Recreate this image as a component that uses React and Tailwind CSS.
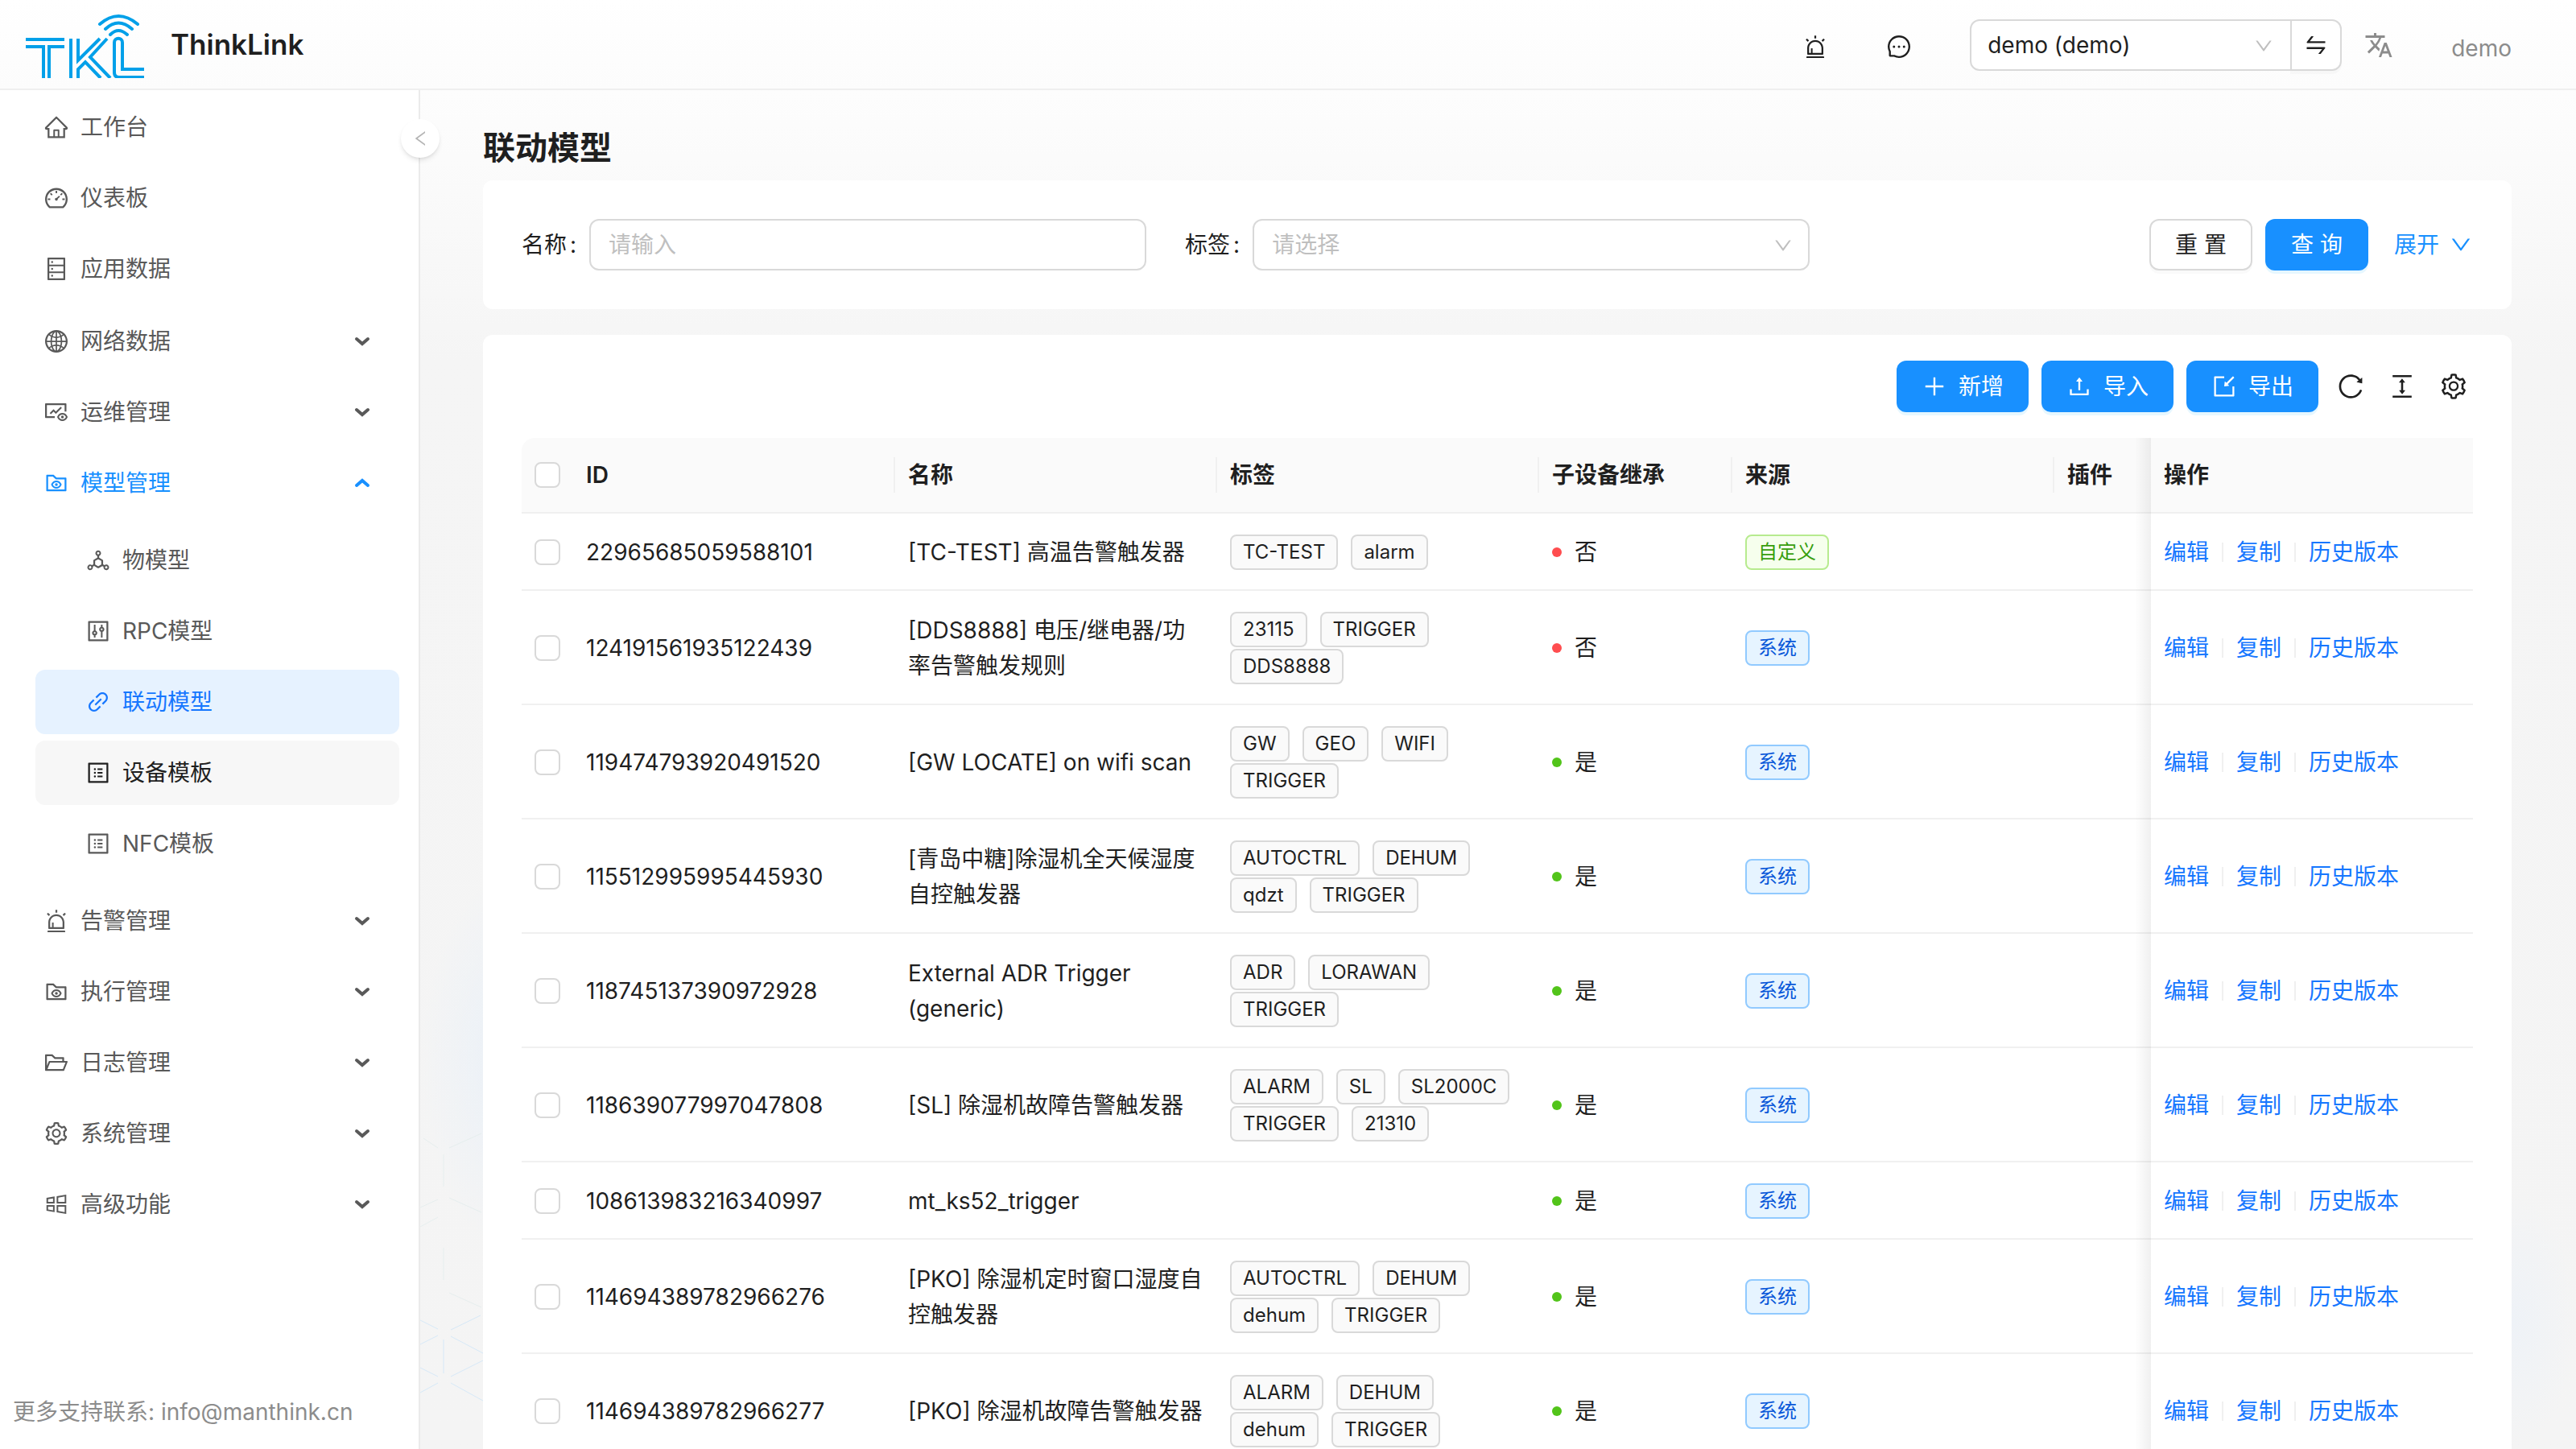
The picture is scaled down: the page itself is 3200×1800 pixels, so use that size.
import React, { useState } from 'react';
import {
    AiOutlineHome,
    AiOutlineDashboard,
    AiOutlineDatabase,
    AiOutlineGlobal,
    AiOutlineFundView,
    AiOutlineFolderView,
    AiOutlineDeploymentUnit,
    AiOutlineControl,
    AiOutlineLink,
    AiOutlineProfile,
    AiOutlineAlert,
    AiOutlineFolderOpen,
    AiOutlineSetting,
    AiOutlineWindows,
    AiOutlineMessage,
    AiOutlineSwap,
    AiOutlineDown,
    AiOutlinePlus,
    AiOutlineUpload,
    AiOutlineImport,
    AiOutlineReload,
    AiOutlineColumnHeight,
} from 'react-icons/ai';
import { MdTranslate } from 'react-icons/md';

const menuPages = [
    { icon: AiOutlineHome, label: '工作台' },
    { icon: AiOutlineDashboard, label: '仪表板' },
    { icon: AiOutlineDatabase, label: '应用数据' },
];

const menuGroups = [
    { icon: AiOutlineGlobal, label: '网络数据', group: true },
    { icon: AiOutlineFundView, label: '运维管理', group: true },
    { icon: AiOutlineFolderView, label: '模型管理', group: true, open: true },
];

const subMenu = [
    { icon: AiOutlineDeploymentUnit, label: '物模型' },
    { icon: AiOutlineControl, label: 'RPC模型' },
    { icon: AiOutlineLink, label: '联动模型', state: 'selected' },
    { icon: AiOutlineProfile, label: '设备模板', state: 'hover' },
    { icon: AiOutlineProfile, label: 'NFC模板' },
];

const menuBottom = [
    { icon: AiOutlineAlert, label: '告警管理', group: true },
    { icon: AiOutlineFolderView, label: '执行管理', group: true },
    { icon: AiOutlineFolderOpen, label: '日志管理', group: true },
    { icon: AiOutlineSetting, label: '系统管理', group: true },
    { icon: AiOutlineWindows, label: '高级功能', group: true },
];

const rows = [
    { id: '22965685059588101', name: '[TC-TEST] 高温告警触发器', tags: ['TC-TEST', 'alarm'], inherit: false, custom: true },
    { id: '124191561935122439', name: '[DDS8888] 电压/继电器/功率告警触发规则', tags: ['23115', 'TRIGGER', 'DDS8888'], inherit: false },
    { id: '119474793920491520', name: '[GW LOCATE] on wifi scan', tags: ['GW', 'GEO', 'WIFI', 'TRIGGER'], inherit: true },
    { id: '115512995995445930', name: '[青岛中糖]除湿机全天候湿度自控触发器', tags: ['AUTOCTRL', 'DEHUM', 'qdzt', 'TRIGGER'], inherit: true },
    { id: '118745137390972928', name: 'External ADR Trigger (generic)', tags: ['ADR', 'LORAWAN', 'TRIGGER'], inherit: true },
    { id: '118639077997047808', name: '[SL] 除湿机故障告警触发器', tags: ['ALARM', 'SL', 'SL2000C', 'TRIGGER', '21310'], inherit: true },
    { id: '108613983216340997', name: 'mt_ks52_trigger', tags: [], inherit: true },
    { id: '114694389782966276', name: '[PKO] 除湿机定时窗口湿度自控触发器', tags: ['AUTOCTRL', 'DEHUM', 'dehum', 'TRIGGER'], inherit: true },
    { id: '114694389782966277', name: '[PKO] 除湿机故障告警触发器', tags: ['ALARM', 'DEHUM', 'dehum', 'TRIGGER'], inherit: true },
];

const Logo = () => (
    <svg viewBox="0 -2 148 84" className="h-21 w-[148px]" fill="none" stroke="#00a0e9" strokeWidth="4" aria-label="TKL">
        <path d="M0 34h48M0 43h22v39M48 43H29v39M56 33v49M65 33v27L92 33M101 33L80 56l25 26M65 82V71l9-9 19 20" />
        <path d="M147 71h-27V38c0-7-10-7-10 0v37c0 4 2 6 6 6h31" />
        <path d="M92 15q23-20 47 0M99 21q16-15 33 0M105 28q10-10 21 0" strokeLinecap="round" />
    </svg>
);

const Chevron = ({ open }) => (
    <svg viewBox="0 0 20 12" className="h-3 w-5" fill="none" stroke="currentColor" strokeWidth="4" strokeLinecap="round">
        <path d={open ? 'M3 9l7-6 7 6' : 'M3 3l7 6 7-6'} />
    </svg>
);

const MenuItem = ({ item }) => {
    const Icon = item.icon;
    return (
        <li>
            <button
                type="button"
                className={`flex h-20 w-full items-center gap-3.5 rounded-xl pl-2.5 pr-4 ${item.open ? 'text-[#1890ff]' : 'text-[#595959]'}`}
            >
                <Icon className="size-8" />
                <span className="flex-1 text-left">{item.label}</span>
                {item.group && <Chevron open={item.open} />}
            </button>
        </li>
    );
};

const SubMenuItem = ({ item }) => {
    const Icon = item.icon;
    let colors = 'text-[#595959]';
    if (item.state === 'selected') colors = 'bg-[#e6f2ff] text-[#1677ff]';
    if (item.state === 'hover') colors = 'bg-[#f7f7f7] text-[#1f1f1f]';
    return (
        <li>
            <button type="button" className={`flex h-20 w-full items-center gap-3.5 rounded-xl pl-[62px] ${colors}`}>
                <Icon className="size-8" />
                {item.label}
            </button>
        </li>
    );
};

const Header = () => (
    <header className="flex h-28 shrink-0 items-center border-b-2 border-[#efefef] bg-linear-to-b from-white to-[#fcfcfc] px-8">
        <Logo />
        <h1 className="ml-8 flex-1 text-[35px] font-semibold">ThinkLink</h1>
        <div className="flex items-center pt-0.5">
            <button type="button" aria-label="告警" className="pt-1"><AiOutlineAlert className="size-8" /></button>
            <button type="button" aria-label="消息" className="ml-18 pt-1"><AiOutlineMessage className="size-8" /></button>
            <div className="relative ml-18 flex">
                <select aria-label="租户" className="h-16 w-100 appearance-none rounded-l-xl border-2 border-[#d9d9d9] bg-white px-5">
                    <option>demo (demo)</option>
                </select>
                <AiOutlineDown className="pointer-events-none absolute right-21 top-5 size-6.5 text-[#bfbfbf]" />
                <button
                    type="button"
                    aria-label="切换"
                    className="-ml-0.5 flex h-16 w-16 items-center justify-center rounded-r-xl border-2 border-[#d9d9d9] bg-white shadow-[0_4px_0_rgba(0,0,0,0.02)]"
                >
                    <AiOutlineSwap className="size-8" />
                </button>
            </div>
            <button type="button" aria-label="语言" className="ml-7 text-[#8c8c8c]"><MdTranslate className="size-9" /></button>
            <span className="ml-18 mr-12 pt-2 text-[#8c8c8c]">demo</span>
        </div>
    </header>
);

const Sidebar = () => (
    <aside className="relative z-10 flex w-[522px] shrink-0 flex-col border-r-2 border-[#ebebeb] bg-white">
        <nav className="flex-1 px-11 pt-1.5">
            <ul className="flex flex-col gap-2">
                {menuPages.map((item) => <MenuItem key={item.label} item={item} />)}
            </ul>
            <ul className="mt-2.5 flex flex-col gap-2">
                {menuGroups.map((item) => <MenuItem key={item.label} item={item} />)}
            </ul>
            <ul className="my-4 -mr-5 flex flex-col gap-2">
                {subMenu.map((item) => <SubMenuItem key={item.label} item={item} />)}
            </ul>
            <ul className="flex flex-col gap-2">
                {menuBottom.map((item) => <MenuItem key={item.label} item={item} />)}
            </ul>
        </nav>
        <p className="px-4 pb-6 text-[#8c8c8c]">更多支持联系: info@manthink.cn</p>
        <button
            type="button"
            aria-label="收起"
            className="absolute -right-6.5 top-9 flex size-12 items-center justify-center rounded-full bg-white text-[#b5b5b5] shadow-md"
        >
            <AiOutlineDown className="size-6 rotate-90" />
        </button>
    </aside>
);

// soft blue glow and faint hexagon lines behind the cards
const Backdrop = () => (
    <>
        <div className="absolute bottom-60 left-0 h-120 w-60 bg-radial from-[#e9f0f8] to-transparent to-70%" />
        <div className="absolute bottom-0 right-0 h-80 w-40 bg-radial from-[#eef2f7] to-transparent to-70%" />
        <svg viewBox="0 0 78 400" className="absolute bottom-0 left-0 h-100 w-[78px]" fill="none" strokeWidth="1">
            <path d="M29 34v40M29 150v40M4 14l18 12M36 26l40-18M36 88l40 18M0 124l22-12M36 206l40 18M0 100l22-10" stroke="#e6eeee" />
            <path d="M0 240l22 11M38 252l37-18M0 270l22-11M38 260l40 21M29 264v42M0 299l22 11M38 310l40-20M0 330l22-12M38 318l40 22" stroke="#d6e8f7" />
        </svg>
    </>
);

const SearchForm = () => {
    const [name, setName] = useState('');
    return (
        <form className="relative flex items-center rounded-xl bg-white p-12" onSubmit={(e) => e.preventDefault()}>
            <label htmlFor="name" className="mr-4">名称<span className="ml-1">:</span></label>
            <input
                id="name"
                value={name}
                onChange={(e) => setName(e.target.value)}
                placeholder="请输入"
                className="h-16 w-[692px] rounded-xl border-2 border-[#d9d9d9] px-5.5 placeholder:text-[#bfbfbf]"
            />
            <label htmlFor="tag" className="ml-12 mr-4">标签<span className="ml-1">:</span></label>
            <div className="relative">
                <select id="tag" className="h-16 w-[692px] appearance-none rounded-xl border-2 border-[#d9d9d9] bg-white px-5.5 text-[#bfbfbf]">
                    <option>请选择</option>
                </select>
                <AiOutlineDown className="pointer-events-none absolute right-5 top-5 size-6.5 text-[#bfbfbf]" />
            </div>
            <div className="ml-auto flex items-center gap-4">
                <button type="reset" className="h-16 w-32 rounded-xl border-2 border-[#d9d9d9] bg-white shadow-[0_4px_0_rgba(0,0,0,0.02)]">重 置</button>
                <button type="submit" className="h-16 w-32 rounded-xl bg-[#1890ff] text-white shadow-[0_4px_0_#e6f7ff]">查 询</button>
                <a href="#expand" className="ml-4 flex items-center gap-3 text-[#1890ff]">
                    展开
                    <AiOutlineDown className="size-7.5" />
                </a>
            </div>
        </form>
    );
};

const PrimaryButton = ({ icon: Icon, children }) => (
    <button type="button" className="flex h-16 w-41 items-center justify-center gap-3.5 rounded-xl bg-[#1890ff] text-white shadow-[0_4px_0_#e6f7ff]">
        <Icon className="size-8" />
        {children}
    </button>
);

const Checkbox = ({ label }) => (
    <input type="checkbox" aria-label={label} className="block size-8 appearance-none rounded-lg border-2 border-[#d9d9d9] bg-white" />
);

const HeadCell = ({ children, divider = true }) => (
    <th scope="col" className="border-b-2 border-[#f0f0f0] px-0 py-6 font-semibold">
        <div className={`px-4 ${divider ? 'border-r-2 border-[#f0f0f0]' : ''}`}>{children}</div>
    </th>
);

const ActionShadow = () => (
    <div className="absolute bottom-[-2px] right-full top-0 w-5 bg-linear-to-l from-black/6 to-transparent" />
);

const ModelTable = () => (
    <table className="w-full table-fixed border-separate border-spacing-0 text-left">
        <colgroup>
            <col className="w-16" />
            <col className="w-100" />
            <col className="w-100" />
            <col className="w-100" />
            <col className="w-60" />
            <col className="w-100" />
            <col className="w-30" />
            <col className="w-100" />
        </colgroup>
        <thead className="bg-[#fafafa]">
            <tr>
                <th className="rounded-tl-2xl border-b-2 border-[#f0f0f0] px-4"><Checkbox label="全选" /></th>
                <HeadCell>ID</HeadCell>
                <HeadCell>名称</HeadCell>
                <HeadCell>标签</HeadCell>
                <HeadCell>子设备继承</HeadCell>
                <HeadCell>来源</HeadCell>
                <HeadCell divider={false}>插件</HeadCell>
                <th scope="col" className="relative border-b-2 border-[#f0f0f0] px-4 font-semibold">
                    <ActionShadow />
                    操作
                </th>
            </tr>
        </thead>
        <tbody>
            {rows.map((row) => (
                <tr key={row.id} className="*:border-b-2 *:border-[#f0f0f0] *:px-4 *:pb-6 *:pt-[26px]">
                    <td><Checkbox label={row.id} /></td>
                    <td>{row.id}</td>
                    <td>{row.name}</td>
                    <td>
                        <div className="flex flex-wrap gap-x-4 gap-y-0.5">
                            {row.tags.map((tag) => (
                                <span key={tag} className="rounded-lg border-2 border-[#d9d9d9] bg-[#fafafa] px-3.5 text-2xl leading-10">
                                    {tag}
                                </span>
                            ))}
                        </div>
                    </td>
                    <td>
                        <span className="flex items-center gap-4">
                            <span className={`size-3 rounded-full ${row.inherit ? 'bg-[#52c41a]' : 'bg-[#ff4d4f]'}`} />
                            {row.inherit ? '是' : '否'}
                        </span>
                    </td>
                    <td>
                        <span
                            className={`inline-block rounded-lg border-2 px-3.5 align-top text-2xl leading-10 ${row.custom
                                ? 'border-[#b7eb8f] bg-[#f6ffed] text-[#389e0d]'
                                : 'border-[#91caff] bg-[#e6f4ff] text-[#0958d9]'
                                }`}
                        >
                            {row.custom ? '自定义' : '系统'}
                        </span>
                    </td>
                    <td />
                    <td className="relative">
                        <ActionShadow />
                        <div className="flex items-center text-[#1677ff]">
                            <a href="#edit">编辑</a>
                            <span className="mx-4 h-6 w-0.5 bg-[#f0f0f0]" />
                            <a href="#copy">复制</a>
                            <span className="mx-4 h-6 w-0.5 bg-[#f0f0f0]" />
                            <a href="#history">历史版本</a>
                        </div>
                    </td>
                </tr>
            ))}
        </tbody>
    </table>
);

const App = () => (
    <div className="flex h-screen flex-col overflow-hidden bg-white font-['Inter','Noto_Sans_CJK_SC',sans-serif] text-[28px] leading-11 text-[#1f1f1f]">
        <Header />
        <div className="flex min-h-0 flex-1">
            <Sidebar />
            <main className="relative min-w-0 flex-1 overflow-hidden bg-linear-to-b from-[#fdfdfd] via-[#f5f5f5] via-20% to-[#f4f4f4] pl-[78px] pr-20 pt-10">
                <Backdrop />
                <h2 className="mb-2 text-[40px] font-semibold leading-16">联动模型</h2>
                <SearchForm />
                <section className="relative mt-8 rounded-xl bg-white px-12">
                    <div className="flex items-center justify-end gap-4 py-8">
                        <PrimaryButton icon={AiOutlinePlus}>新增</PrimaryButton>
                        <PrimaryButton icon={AiOutlineUpload}>导入</PrimaryButton>
                        <PrimaryButton icon={AiOutlineImport}>导出</PrimaryButton>
                        <div className="mx-1.5 flex items-center gap-7">
                            <button type="button" aria-label="刷新"><AiOutlineReload className="size-9" /></button>
                            <button type="button" aria-label="密度"><AiOutlineColumnHeight className="size-9" /></button>
                            <button type="button" aria-label="列设置"><AiOutlineSetting className="size-9" /></button>
                        </div>
                    </div>
                    <ModelTable />
                </section>
            </main>
        </div>
    </div>
);

export default App;
